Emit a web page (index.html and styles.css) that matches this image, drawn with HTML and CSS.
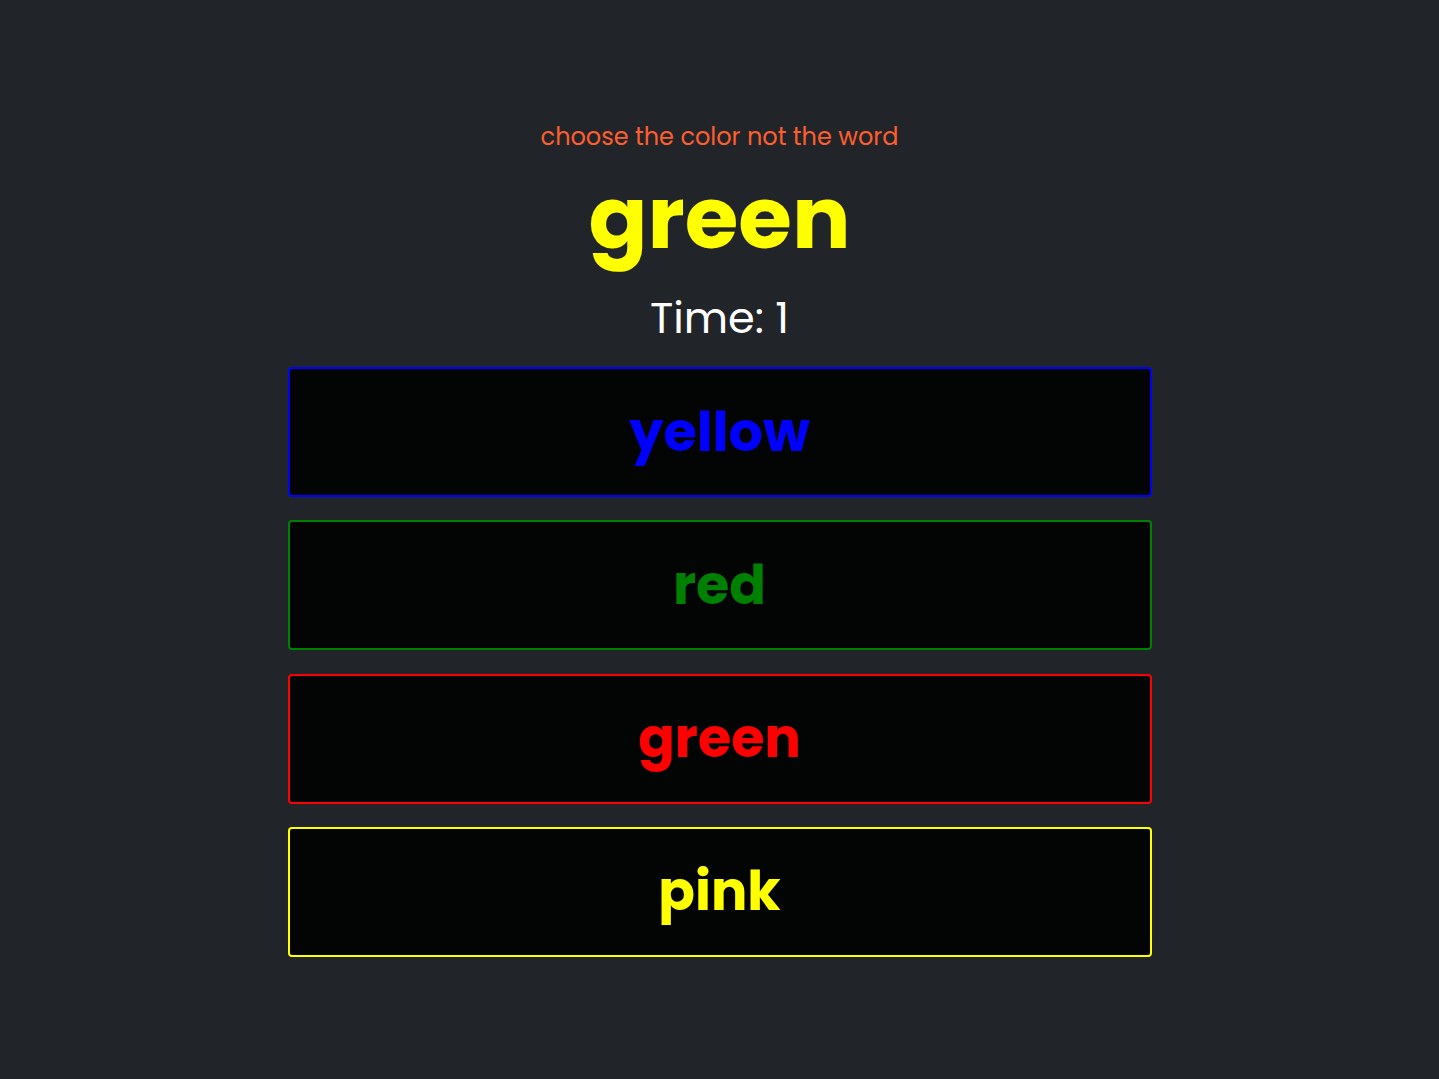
FILE: index.html
```html
<!DOCTYPE html>
<html>
<head>
<meta charset="utf-8">
<link rel="stylesheet" href="styles.css">
</head>
<body>
<main class="game">
  <p class="hint">choose the color not the word</p>
  <h1 class="word">green</h1>
  <p class="timer">Time: 1</p>
  <div class="choices">
    <button class="choice c-blue">yellow</button>
    <button class="choice c-green">red</button>
    <button class="choice c-red">green</button>
    <button class="choice c-yellow">pink</button>
  </div>
</main>
</body>
</html>
```
FILE: styles.css
```css
html, body {
  margin: 0;
  padding: 0;
  background: #212429;
  height: 100%;
}
body {
  font-family: "Poppins", "Inter", "Noto Sans", sans-serif;
}
.game {
  display: flex;
  flex-direction: column;
  align-items: center;
  padding-top: 120px;
}
.hint {
  margin: 0;
  color: #ff5e2e;
  font-size: 24px;
  line-height: 34px;
}
.word {
  margin: 9px 0 0;
  color: #ffff00;
  font-size: 87px;
  font-weight: 700;
  line-height: 110px;
}
.timer {
  margin: 17px 0 0;
  color: #ffffff;
  font-size: 43px;
  line-height: 56px;
}
.choices {
  margin-top: 21px;
  width: 864px;
  display: flex;
  flex-direction: column;
  gap: 23.33px;
}
.choice {
  height: 130px;
  background: #030504;
  border: 2px solid;
  border-radius: 4px;
  font-family: inherit;
  font-size: 54px;
  font-weight: 700;
  padding: 0;
}
.c-blue { border-color: #0000ff; color: #0000ff; }
.c-green { border-color: #008000; color: #008000; }
.c-red { border-color: #ff0000; color: #ff0000; }
.c-yellow { border-color: #ffff00; color: #ffff00; }
```
